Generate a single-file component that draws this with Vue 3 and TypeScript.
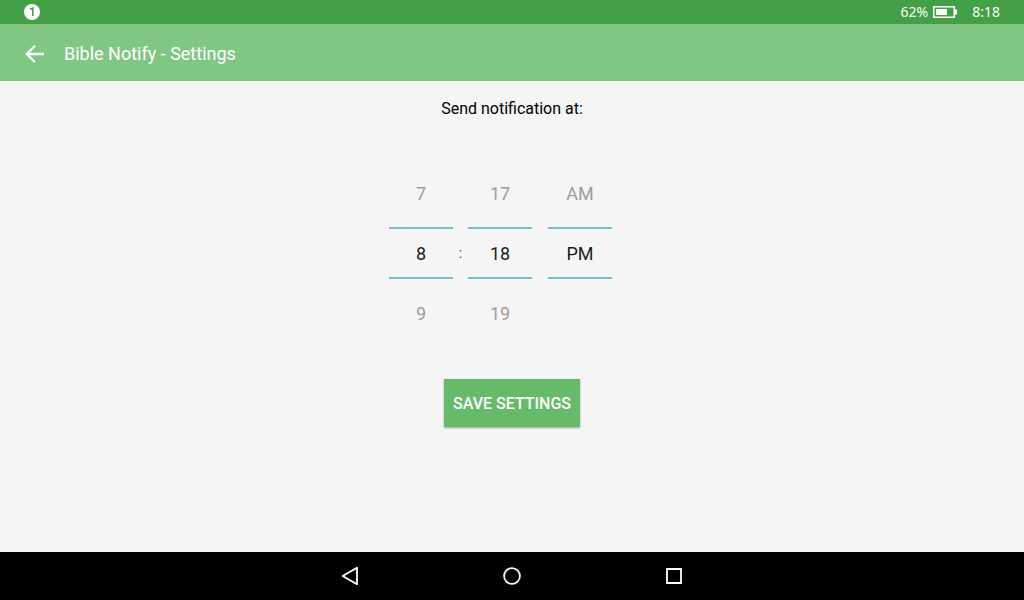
<script setup lang="ts">
import { computed, ref } from 'vue'

const hour = ref(8)
const minute = ref(18)
const period = ref<'AM' | 'PM'>('PM')

const wrap = (value: number, min: number, max: number): number =>
  value > max ? min : value < min ? max : value

interface Wheel {
  id: string
  label: string
  prev: string
  value: string
  next: string
  step: (delta: number) => void
}

const wheels = computed<Wheel[]>(() => [
  {
    id: 'hour',
    label: 'Hour',
    prev: String(wrap(hour.value - 1, 1, 12)),
    value: String(hour.value),
    next: String(wrap(hour.value + 1, 1, 12)),
    step: (delta) => { hour.value = wrap(hour.value + delta, 1, 12) },
  },
  {
    id: 'minute',
    label: 'Minute',
    prev: String(wrap(minute.value - 1, 0, 59)).padStart(2, '0'),
    value: String(minute.value).padStart(2, '0'),
    next: String(wrap(minute.value + 1, 0, 59)).padStart(2, '0'),
    step: (delta) => { minute.value = wrap(minute.value + delta, 0, 59) },
  },
  {
    id: 'period',
    label: 'AM or PM',
    prev: period.value === 'PM' ? 'AM' : '',
    value: period.value,
    next: period.value === 'AM' ? 'PM' : '',
    step: (delta) => { period.value = delta < 0 ? 'AM' : 'PM' },
  },
])
</script>

<template>
  <div class="screen">
    <div class="status-bar">
      <svg class="notice" width="16" height="16" viewBox="0 0 16 16" aria-hidden="true">
        <circle cx="8" cy="8" r="8" fill="#fff" />
        <path d="M6 5.2L8.8 4.2V12" fill="none" stroke="#43a047" stroke-width="1.6" />
      </svg>
      <span class="percent">62%</span>
      <svg class="battery" width="24" height="12" viewBox="0 0 24 12" aria-hidden="true">
        <path d="M.75 .75H21.25V11.25H.75Z" fill="none" stroke="#fff" stroke-width="1.5" />
        <path d="M3 3H14V9H3ZM22 3.5H24V8.5H22Z" fill="#fff" />
      </svg>
      <span class="clock">8:18</span>
    </div>

    <header class="app-bar">
      <button class="icon-button" type="button" aria-label="Back">
        <svg width="20" height="20" viewBox="0 0 20 20" aria-hidden="true">
          <path d="M20 10H3M11 1.7L2.7 10L11 18.3" fill="none" stroke="#fff" stroke-width="2.3" />
        </svg>
      </button>
      <h1>Bible Notify - Settings</h1>
    </header>

    <main class="content">
      <h2 id="time-label">Send notification at:</h2>

      <div class="picker" role="group" aria-labelledby="time-label">
        <template v-for="wheel in wheels" :key="wheel.id">
          <div class="wheel">
            <button class="neighbour" type="button" :aria-label="`Previous ${wheel.label}`" :disabled="!wheel.prev" @click="wheel.step(-1)">{{ wheel.prev }}</button>
            <input class="value" type="text" :aria-label="wheel.label" :value="wheel.value" readonly>
            <button class="neighbour" type="button" :aria-label="`Next ${wheel.label}`" :disabled="!wheel.next" @click="wheel.step(1)">{{ wheel.next }}</button>
          </div>
          <span v-if="wheel.id === 'hour'" class="colon">:</span>
          <span v-else-if="wheel.id === 'minute'" class="gap"></span>
        </template>
      </div>

      <button class="save" type="button">SAVE SETTINGS</button>
    </main>

    <nav class="nav-bar" aria-label="System navigation">
      <button class="icon-button" type="button" aria-label="Back">
        <svg width="20" height="20" viewBox="0 0 20 20" aria-hidden="true">
          <path d="M17 1.8V18.2L2.6 10Z" fill="none" stroke="#fff" stroke-width="1.8" stroke-linejoin="round" />
        </svg>
      </button>
      <button class="icon-button" type="button" aria-label="Home">
        <svg width="20" height="20" viewBox="0 0 20 20" aria-hidden="true">
          <circle cx="10" cy="10" r="7.9" fill="none" stroke="#fff" stroke-width="1.8" />
        </svg>
      </button>
      <button class="icon-button" type="button" aria-label="Recent apps">
        <svg width="20" height="20" viewBox="0 0 20 20" aria-hidden="true">
          <path d="M3 3H17V17H3Z" fill="none" stroke="#fff" stroke-width="1.8" />
        </svg>
      </button>
    </nav>
  </div>
</template>

<style>
body {
  margin: 0;
}
</style>

<style scoped>
.screen {
  display: flex;
  flex-direction: column;
  min-height: 100vh;
  background: #f5f5f5;
  font-family: Roboto, "Noto Sans", sans-serif;
}

button,
input {
  margin: 0;
  padding: 0;
  border: 0;
  border-radius: 0;
  background: none;
  font: inherit;
}

button {
  cursor: pointer;
}

svg {
  display: block;
}

.status-bar {
  display: flex;
  align-items: center;
  height: 24px;
  padding: 0 24px;
  background: #43a047;
  color: #fff;
  font: 14px/24px "Noto Sans", sans-serif;
}

.notice {
  margin-right: auto;
}

.battery {
  margin: 0 15px 0 5px;
}

.app-bar {
  box-sizing: border-box;
  display: flex;
  align-items: center;
  gap: 12px;
  height: 57px;
  padding: 3px 16px 0;
  background: #81c784;
  color: #fff;
}

.icon-button {
  display: flex;
  align-items: center;
  justify-content: center;
  width: 36px;
  height: 36px;
}

h1 {
  margin: 0;
  font-size: 18px;
  font-weight: 400;
  line-height: 24px;
}

.content {
  display: flex;
  flex: 1;
  flex-direction: column;
  align-items: center;
  padding: 16px;
}

h2 {
  margin: 0;
  color: #000;
  font-size: 16px;
  font-weight: 400;
  line-height: 24px;
}

.picker {
  display: flex;
  align-items: center;
  margin: 38px 23px 32px 0;
}

.wheel {
  display: flex;
  flex-direction: column;
  width: 64px;
  font-size: 18px;
}

.neighbour {
  height: 68px;
  color: #9c9c9c;
}

.value {
  box-sizing: border-box;
  width: 100%;
  height: 52px;
  border: solid #76bed6;
  border-width: 2px 0;
  color: #1c1c1c;
  text-align: center;
}

.colon {
  width: 15px;
  color: #444;
  font-size: 14px;
  text-align: center;
}

.gap {
  width: 16px;
}

.save {
  min-width: 136px;
  height: 48px;
  padding: 0 8px;
  background: #66bb6a;
  box-shadow: 0 1px 2px rgba(0, 0, 0, 0.35);
  color: #fff;
  font-size: 16px;
  font-weight: 500;
}

.nav-bar {
  display: flex;
  align-items: center;
  justify-content: center;
  gap: 126px;
  height: 48px;
  background: #000;
}
</style>
